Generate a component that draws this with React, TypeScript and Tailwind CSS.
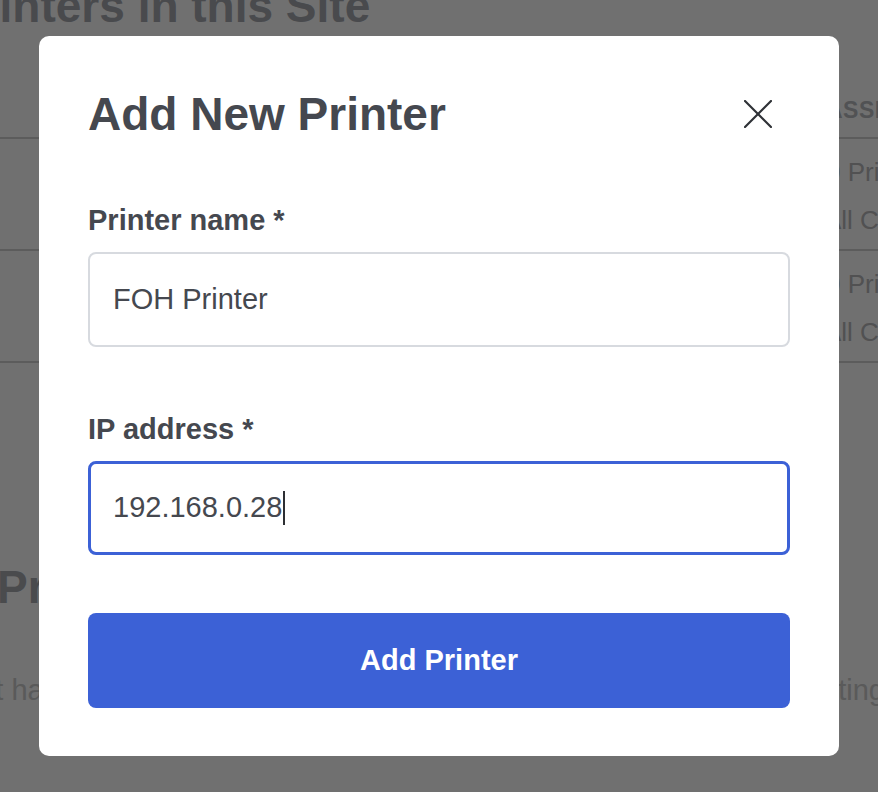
import React from 'react';

const CloseIcon: React.FC = () => (
  <svg width="28" height="28" viewBox="0 0 28 28" fill="none" stroke="#2f3237" strokeWidth="2.2" strokeLinecap="round">
    <path d="M1 1 27 27" />
    <path d="M27 1 1 27" />
  </svg>
);

// the page that sits behind the dimmed overlay
const PrintersPage: React.FC = () => (
  <div className="flex flex-col w-[878px] h-[792px] overflow-hidden bg-white">
    <h1 className="-mt-[22px] -ml-[49px] whitespace-nowrap text-[46px] leading-[56px] font-bold text-[#a6a9b0]">
      Printers in this Site
    </h1>

    <div className="flex h-[105px] items-end border-b-2 border-[#d2d2d2] pb-[14px]">
      <span className="ml-[826px] whitespace-nowrap text-[23px] leading-[26px] font-bold tracking-[0.5px] uppercase text-[#b9bbc0]">
        Assigned
      </span>
    </div>
    {[0, 1].map((row) => (
      <div key={row} className="flex h-[112px] flex-col justify-center border-b-2 border-[#d2d2d2] pt-[4px]">
        <span className="ml-[826px] whitespace-nowrap text-[26px] leading-[48px] text-[#b8b8ba]">0 Printers</span>
        <span className="ml-[824px] whitespace-nowrap text-[26px] leading-[48px] text-[#b8b8ba]">All Categories</span>
      </div>
    ))}

    <h2 className="mt-[196px] -ml-[3px] whitespace-nowrap text-[46px] leading-[56px] font-bold text-[#a8aab0]">
      Printer Groups
    </h2>
    <p className="mt-[55px] flex justify-between whitespace-nowrap text-[29px] leading-[40px] text-[#cdcdcd]">
      <span className="-ml-[45px]">that have no group</span>
      <span className="-mr-[7px]">use the default setting</span>
    </p>
  </div>
);

const AddPrinterModal: React.FC = () => (
  <div className="w-[800px] rounded-[10px] bg-white px-[49px] pt-[50px] pb-[48px] text-[#45484f]">
    <div className="flex h-[56px] items-center justify-between">
      <h2 className="text-[46px] leading-[56px] font-bold">Add New Printer</h2>
      <button className="mr-[12px] flex h-[40px] w-[40px] items-center justify-center">
        <CloseIcon />
      </button>
    </div>

    <label className="mt-[60px] block text-[29px] leading-[36px] font-bold">Printer name *</label>
    <div className="mt-[14px] flex h-[95px] items-center rounded-[8px] border-2 border-[#d7dadf] px-[23px] text-[29px]">
      FOH Printer
    </div>

    <label className="mt-[64px] block text-[29px] leading-[36px] font-bold">IP address *</label>
    <div className="mt-[14px] flex h-[94px] items-center rounded-[8px] border-[3px] border-[#3c61d6] px-[22px] text-[29px]">
      192.168.0.28
      <span className="ml-[1px] h-[34px] w-[2px] bg-[#2d2f33]" />
    </div>

    <button className="mt-[58px] flex h-[95px] w-full items-center justify-center rounded-[8px] bg-[#3c61d6] text-[29px] font-bold text-white">
      Add Printer
    </button>
  </div>
);

export default function App() {
  return (
    <div className="relative w-[878px] h-[792px] overflow-hidden font-['Liberation_Sans',Arial,sans-serif]">
      <PrintersPage />
      <div className="absolute inset-0 flex items-center justify-center bg-black/[0.56]">
        <AddPrinterModal />
      </div>
    </div>
  );
}
